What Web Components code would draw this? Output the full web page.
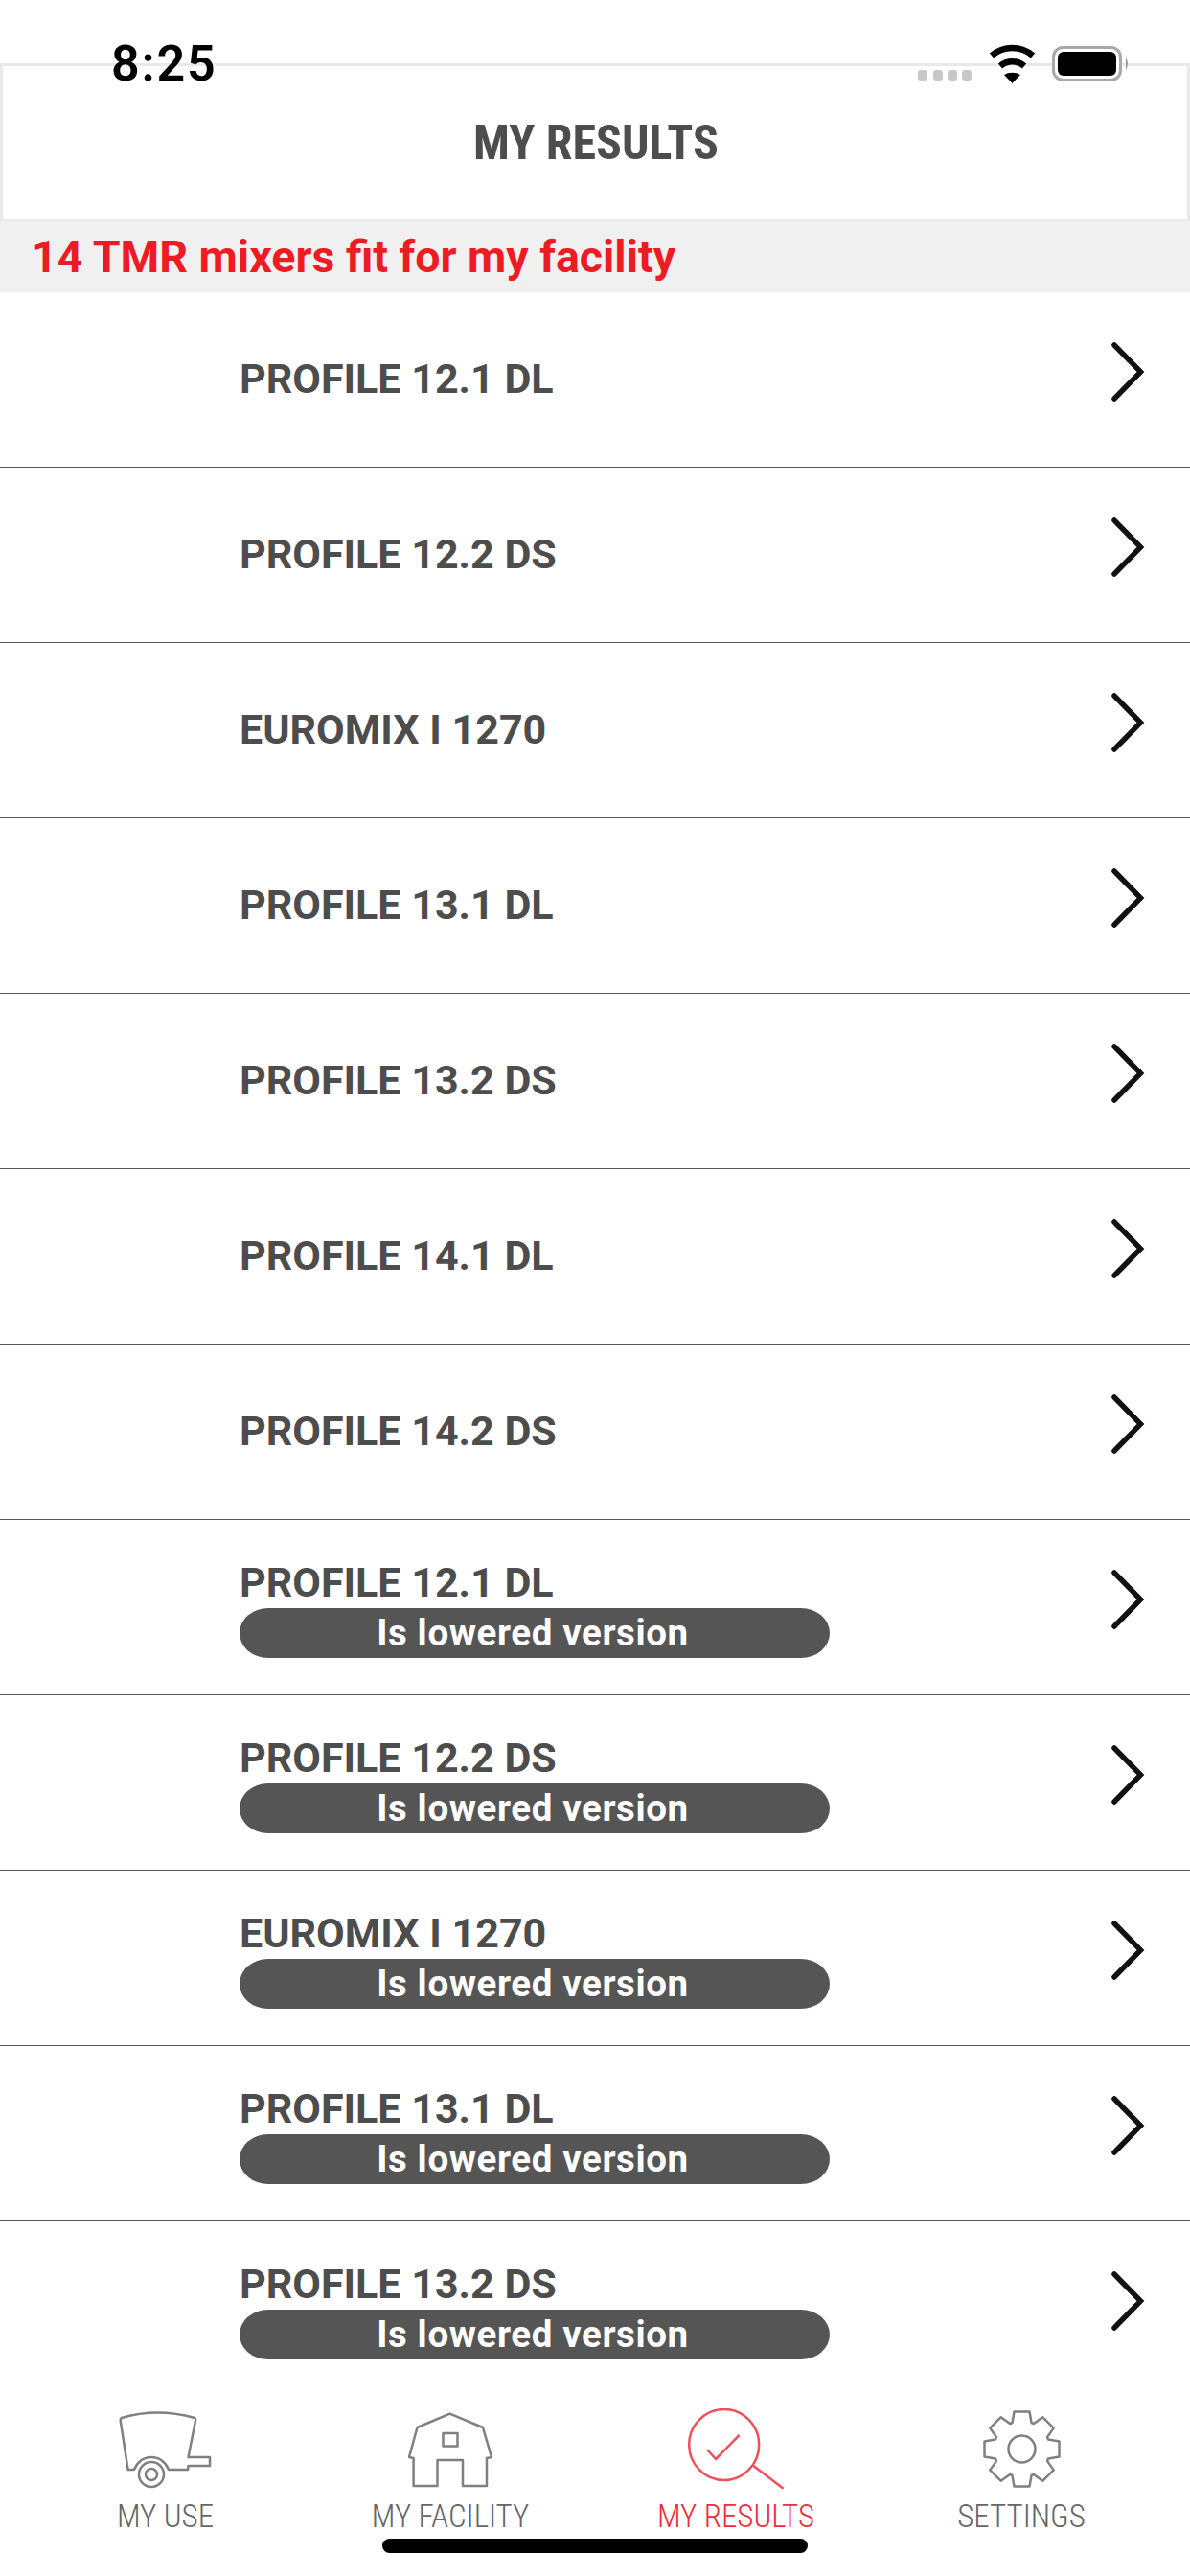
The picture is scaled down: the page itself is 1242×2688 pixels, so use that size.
<!DOCTYPE html>
<html lang="en"><head><meta charset="utf-8"><title>My Results</title>
<style>html,body{margin:0;padding:0;background:#fff}body{font-family:Roboto,sans-serif}</style></head>
<body>
<app-screen>
  <status-bar slot="over"></status-bar>
  <page-header>MY RESULTS</page-header>
  <count-band>14 TMR mixers fit for my facility</count-band>
  <result-list>
    <result-row>PROFILE 12.1 DL</result-row>
    <result-row>PROFILE 12.2 DS</result-row>
    <result-row>EUROMIX I 1270</result-row>
    <result-row>PROFILE 13.1 DL</result-row>
    <result-row>PROFILE 13.2 DS</result-row>
    <result-row>PROFILE 14.1 DL</result-row>
    <result-row>PROFILE 14.2 DS</result-row>
    <result-row lowered>PROFILE 12.1 DL</result-row>
    <result-row lowered>PROFILE 12.2 DS</result-row>
    <result-row lowered>EUROMIX I 1270</result-row>
    <result-row lowered>PROFILE 13.1 DL</result-row>
    <result-row lowered>PROFILE 13.2 DS</result-row>
  </result-list>
  <tab-bar>
    <tab-item icon="trailer" style="--cx:172.500px">MY USE</tab-item>
    <tab-item icon="barn" style="--cx:470px">MY FACILITY</tab-item>
    <tab-item icon="search" active style="--cx:768px">MY RESULTS</tab-item>
    <tab-item icon="gear" style="--cx:1066px">SETTINGS</tab-item>
  </tab-bar>
</app-screen>
<script>
function def(name, html, init){
  customElements.define(name, class extends HTMLElement{
    constructor(){super();this.attachShadow({mode:'open'}).innerHTML=html;}
    connectedCallback(){ if(init) init(this); }
  });
}
def('app-screen',`<style>
:host{display:flex;flex-direction:column;width:1242px;height:2688px;position:relative;overflow:hidden;background:#fff;font-family:Roboto,sans-serif}
.ind{position:absolute;left:399px;top:2649px;width:444px;height:15px;border-radius:8px;background:#000}
</style><slot name="over"></slot><slot></slot><div class="ind"></div>`);
def('status-bar',`<style>
:host{position:absolute;left:0;top:0;width:1242px;height:90px;z-index:2;display:block}
.t{position:absolute;left:116px;top:38px;font:600 52px/58px Roboto,sans-serif;color:#000;letter-spacing:1.800px}
svg{position:absolute;left:950px;top:40px}
</style><span class="t">8:25</span>
<svg width="240" height="50" viewBox="950 40 240 50">
 <g fill="#c8c8c8"><rect x="958" y="73" width="10" height="11" rx="3"/><rect x="974" y="73" width="10" height="11" rx="3"/><rect x="989" y="73" width="10" height="11" rx="3"/><rect x="1004" y="73" width="10" height="11" rx="3"/></g>
 <g fill="none" stroke="#000" stroke-width="6.5"><path d="M1035 58a33 33 0 0 1 43 0"/><path d="M1044 69a19 19 0 0 1 25 0"/></g>
 <path d="M1048 78a12 8 0 0 1 17 0l-8.500 9z" fill="#000"/>
 <rect x="1099.500" y="49.500" width="70" height="34" rx="10" fill="#fff" stroke="#a8a8a8" stroke-width="3"/>
 <rect x="1104" y="54" width="61" height="25" rx="6" fill="#000"/>
 <path d="M1175 60q4 6 0 13z" fill="#999"/>
</svg>`);
def('page-header',`<style>
:host{display:flex;align-items:center;justify-content:center;box-sizing:border-box;margin-top:66px;height:165px;padding-left:2px;border:3px solid #e9e9e9;background:#fff;color:#4d4d4d;font:700 50px/1 Roboto,sans-serif;font-stretch:condensed}
</style><slot></slot>`);
def('count-band',`<style>
:host{display:flex;align-items:center;box-sizing:border-box;height:74px;padding:0 0 0 33px;background:#f0f0f0;color:#ed1c24;font:700 46.500px/1 Roboto,sans-serif}
</style><slot></slot>`);
def('result-list',`<style>:host{display:block;flex:1 1 0;min-height:0;overflow:hidden}</style><slot></slot>`);
def('result-row',`<style>
:host{display:flex;align-items:center;box-sizing:border-box;height:183px;border-bottom:1px solid #555;padding-left:250px;padding-right:46.500px;color:#4d4d4d;font:700 43px/1 Roboto,sans-serif}
.m{flex:1;display:flex;flex-direction:column}
.n{line-height:54px;white-space:nowrap}
.p{display:none;box-sizing:border-box;width:616px;height:52px;border-radius:30px/26px;background:#555;color:#fff;font:700 38.500px/52px Roboto,sans-serif;text-align:center;letter-spacing:.6px;padding-right:4px}
:host([lowered]) .p{display:block}
:host(:not([lowered])) .m{margin-bottom:3px}
svg{margin-bottom:17px}
</style><div class="m"><div class="n"><slot></slot></div><div class="p">Is lowered version</div></div>
<svg width="36" height="62" viewBox="0 0 36 62"><path d="M3 3 30.500 31 3 59" fill="none" stroke="#111" stroke-width="5.500" stroke-linecap="round" stroke-linejoin="miter"/></svg>`);
def('tab-bar',`<style>
:host{display:block;position:relative;flex:none;height:224px;background:#fff}
</style><slot></slot>`);
const gearPath=()=>{const c=40;let d='';
  for(let i=0;i<8;i++){const a=i*Math.PI/4;
    const P=(x,y)=>[(c+x*Math.cos(a)+y*Math.sin(a)).toFixed(1),(c+x*Math.sin(a)-y*Math.cos(a)).toFixed(1)].join(' ');
    d+=(i?'A28 28 0 0 0 ':'M')+P(-10,27.500)+'L'+P(-8,39)+'L'+P(8,39)+'L'+P(10,27.500);
  }
  return d+'A28 28 0 0 0 '+(c-10).toFixed(1)+' '+(c-27.5).toFixed(1)+'Z';};
const ICONS={
 trailer:[124,2516,97,81,`<path d="M127 2523Q164 2512 203 2523Q204.500 2523.500 204 2526L196.500 2564H219V2573H196.500L196 2577H176C173 2569 166 2564 158 2564S143 2569 140 2577H133.600L125.700 2526Q125.500 2523.500 127 2523Z"/><circle cx="158" cy="2582" r="13"/><circle cx="158" cy="2582" r="6"/>`],
 barn:[426,2517,90,79,`<path d="M469.500 2518.700 504 2533 513 2564 508 2565V2594H483V2567H456.500V2594H431.600V2565L427 2564 435.500 2533Z"/><rect x="462.500" y="2539" width="15" height="13.600"/>`],
 search:[718,2513,101,85,`<ellipse cx="755.700" cy="2551" rx="36.500" ry="37"/><path d="M786 2572.700 817.600 2596.700M738 2556 747 2566 771.600 2541"/>`],
 gear:[1026,2515,81,81,``]
};
def('tab-item',`<style>
:host{position:absolute;top:0;left:var(--cx);width:0;height:224px;display:block;color:#666;font:300 33px/1 Roboto,sans-serif;font-stretch:condensed}
:host([active]){color:#ee2c3c}
.l{position:absolute;left:-200px;width:400px;top:145px;text-align:center;white-space:nowrap}
svg{position:absolute;fill:none;stroke:#808080;stroke-width:2.500;stroke-linejoin:round}
:host([active]) svg{stroke:#f0505c}
</style><svg></svg><div class="l"><slot></slot></div>`,el=>{
  const n=el.getAttribute('icon'),[x,y,w,h,b]=ICONS[n],cx=parseFloat(el.style.getPropertyValue('--cx')),s=el.shadowRoot.querySelector('svg');
  s.setAttribute('width',w);s.setAttribute('height',h);
  s.setAttribute('viewBox',`${x} ${y} ${w} ${h}`);
  s.style.left=(x-cx)+'px';s.style.top=(y-2464)+'px';
  s.innerHTML=n==='gear'?`<g transform="translate(1026.500 2515.500)"><path d="${gearPath()}"/><circle cx="40" cy="40" r="14"/></g>`:b;
});
</script>
</body></html>
